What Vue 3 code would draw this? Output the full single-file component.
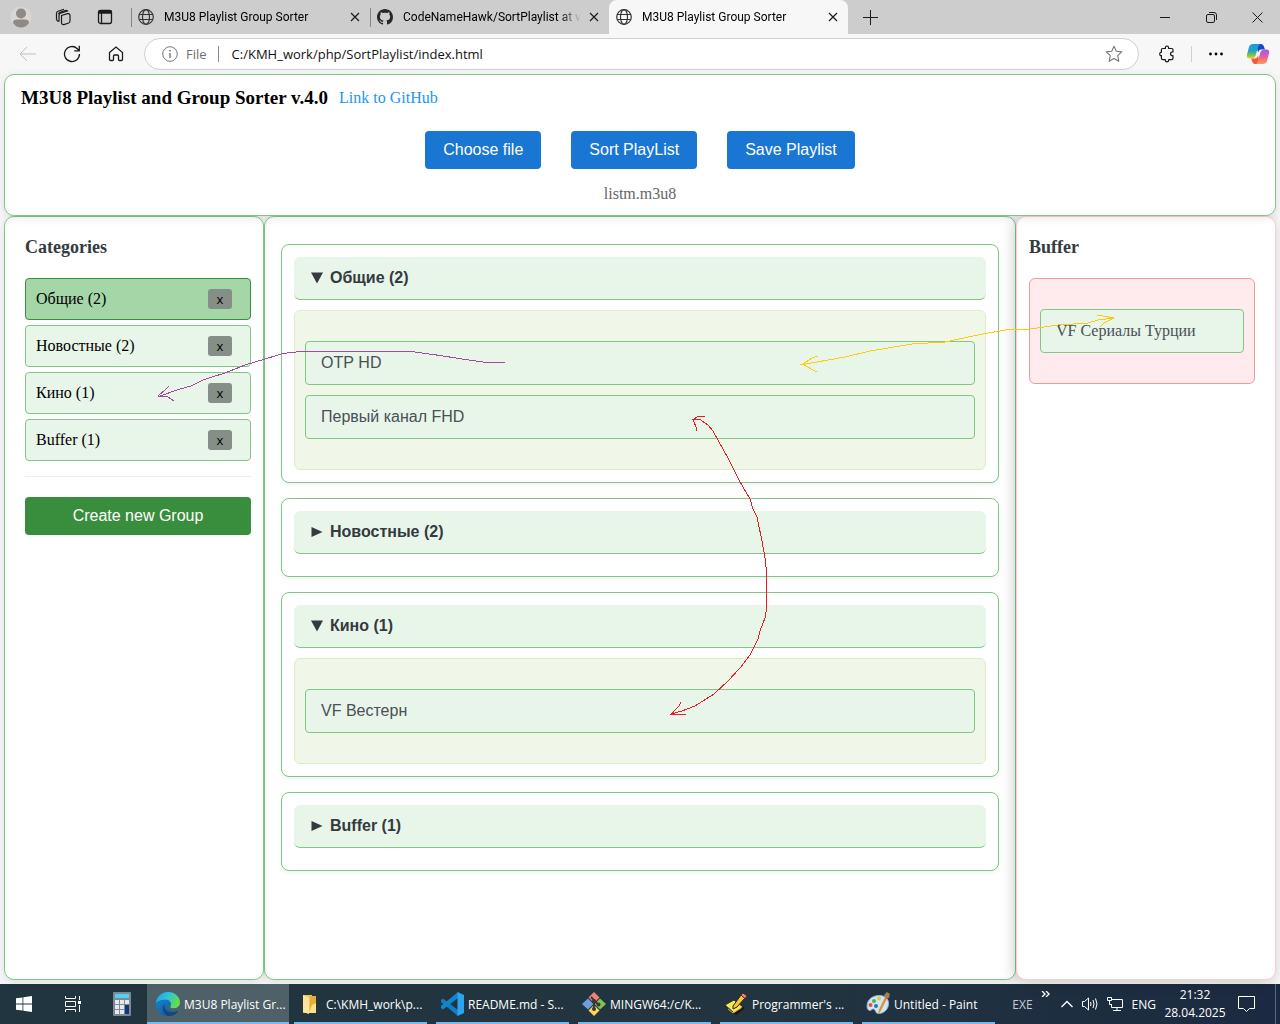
<script setup>
import { ref } from 'vue'

const tabs = [
  { title: 'M3U8 Playlist Group Sorter', icon: 'globe', active: false },
  { title: 'CodeNameHawk/SortPlaylist at v.', icon: 'github', active: false },
  { title: 'M3U8 Playlist Group Sorter', icon: 'globe', active: true }
]

const groups = ref([
  { name: 'Общие', count: 2, open: true, channels: ['ОТР HD', 'Первый канал FHD'] },
  { name: 'Новостные', count: 2, open: false, channels: [] },
  { name: 'Кино', count: 1, open: true, channels: ['VF Вестерн'] },
  { name: 'Buffer', count: 1, open: false, channels: [] }
])
const current = ref(0)
const buffer = ['VF Сериалы Турции']

const tasks = [
  { title: 'M3U8 Playlist Gr...', icon: 'edge', active: true },
  { title: 'C:\\KMH_work\\p...', icon: 'folder' },
  { title: 'README.md - S...', icon: 'code' },
  { title: 'MINGW64:/c/K...', icon: 'git' },
  { title: "Programmer's ...", icon: 'notepad' },
  { title: 'Untitled - Paint', icon: 'paint' }
]
</script>

<template>
  <div class="screen">
    <header class="tabbar">
      <div class="tools">
        <button class="tool" aria-label="Profile">
          <svg width="24" height="24" viewBox="0 0 24 24"><circle cx="12" cy="12" r="10.5" fill="#d9d6d3" /><circle cx="12" cy="8.500" r="5" fill="#8f8a86" /><path d="M4 18c0-2.500 1.500-3.500 3.500-3.500h9c2 0 3.500 1 3.500 3.500-2 3-5 4.500-8 4.500s-6-1.500-8-4.500z" fill="#8f8a86" /></svg>
        </button>
        <button class="tool" aria-label="Workspaces">
          <svg class="ln" width="18" height="18" viewBox="0 0 18 18"><path d="M7.500 7.500l6-1.800q2-.5 2.500 1.300v6q0 1.500-1.300 2l-4.700 1.600q-2 .4-2.500-1.400zM5 13.500V7.500q0-1.700 1.500-2.200L13.500 3q-.8-.9-2.200-.5L6 4.200Q4.600 4.700 4.600 6.200M2.500 11.500V5.500q0-1.700 1.500-2.200L10 1.300M5 13.500q-1.800 0-2.500-2" stroke-width="1.200" /></svg>
        </button>
        <button class="tool" aria-label="Tab actions">
          <svg class="ln" width="16" height="16" viewBox="0 0 16 16"><rect x="1.500" y="1.500" width="13" height="13" rx="2" stroke-width="1.300" /><path d="M1.500 3h13" stroke-width="3.500" /><path d="M4.500 4v10" stroke-width="1.300" /></svg>
        </button>
      </div>
      <nav class="tabs">
        <div v-for="(t, i) in tabs" :key="i" class="tab" :class="{ active: t.active }">
          <svg v-if="t.icon === 'globe'" class="fav" viewBox="0 0 16 16"><g fill="none" stroke="#33373b" stroke-width="1.200"><circle cx="8" cy="8" r="7.300" /><ellipse cx="8" cy="8" rx="3.500" ry="7.300" /><path d="M1.300 5.500h13.400M1.300 10.500h13.400" /></g></svg>
          <svg v-else class="fav" viewBox="0 0 16 16"><path fill="#24292f" d="M8 0C3.580 0 0 3.580 0 8c0 3.540 2.290 6.530 5.470 7.590.4.070.55-.17.55-.38v-1.490c-2.230.48-2.700-.95-2.700-.95-.36-.93-.89-1.180-.89-1.180-.73-.5.050-.49.050-.49.800.060 1.230.83 1.230.83.710 1.230 1.870.88 2.330.67.070-.52.280-.88.510-1.080-1.780-.2-3.640-.89-3.640-3.950 0-.87.310-1.590.82-2.150-.08-.2-.36-1.020.080-2.120 0 0 .67-.21 2.200.82a7.600 7.600 0 0 1 4 0c1.530-1.040 2.200-.82 2.200-.82.440 1.100.16 1.920.080 2.120.51.560.82 1.270.82 2.150 0 3.070-1.870 3.750-3.650 3.950.29.250.54.730.54 1.480v2.190c0 .21.150.46.550.38A8 8 0 0 0 16 8c0-4.420-3.580-8-8-8z" /></svg>
          <span class="tab-title">{{ t.title }}</span>
          <button class="tab-close" aria-label="Close tab">
            <svg class="ln" width="10" height="10" viewBox="0 0 10 10"><path d="M1 1l8 8M9 1L1 9" stroke-width="1.200" /></svg>
          </button>
        </div>
      </nav>
      <button class="newtab" aria-label="New tab">
        <svg class="ln" width="15" height="15" viewBox="0 0 15 15"><path d="M7.500 0v15M0 7.500h15" /></svg>
      </button>
      <div class="window-controls">
        <button aria-label="Minimize"><svg class="ln" width="10" height="10" viewBox="0 0 10 10"><path d="M0 5.500h10" /></svg></button>
        <button aria-label="Restore"><svg class="ln" width="11" height="11" viewBox="0 0 11 11"><rect x=".5" y="2.500" width="8" height="8" rx="1.500" /><path d="M3 .5h5q2.500 0 2.500 2.500v5" /></svg></button>
        <button aria-label="Close"><svg class="ln" width="11" height="11" viewBox="0 0 11 11"><path d="M.5.500l10 10M10.500.500l-10 10" /></svg></button>
      </div>
    </header>

    <div class="toolbar">
      <button class="nav-btn dim" aria-label="Back"><svg class="ln" width="18" height="16" viewBox="0 0 18 16"><path d="M17 8H1M8 1L1 8l7 7" /></svg></button>
      <button class="nav-btn" aria-label="Refresh"><svg class="ln" width="18" height="18" viewBox="0 0 18 18"><path d="M16.500 9A7.500 7.500 0 1 1 14.300 3.700L16 5.500M16.300.8v5h-5" stroke-width="1.300" /></svg></button>
      <button class="nav-btn" aria-label="Home"><svg class="ln" width="16" height="16" viewBox="0 0 16 16"><path d="M1.500 6.500L8 1l6.500 5.500v7q0 1-1 1h-2q-1 0-1-1V10q0-1-1-1h-3q-1 0-1 1v3.500q0 1-1 1h-2q-1 0-1-1z" stroke-width="1.300" /></svg></button>
      <div class="address">
        <svg width="16" height="16" viewBox="0 0 16 16" fill="none" stroke="#777"><circle cx="8" cy="8" r="7.300" /><path d="M8 7v5" stroke-width="1.400" /><circle cx="8" cy="4.700" r=".5" fill="#777" /></svg>
        <label for="url">File</label>
        <span class="bar"></span>
        <input id="url" type="text" value="C:/KMH_work/php/SortPlaylist/index.html" />
        <svg width="18" height="18" viewBox="0 0 18 18" fill="none" stroke="#777" stroke-width="1.100" stroke-linejoin="round"><path d="M9 1.300l2.300 5 5.400.600-4 3.700 1.100 5.600L9 13.500l-4.800 2.700 1.100-5.600-4-3.700 5.400-.6z" /></svg>
      </div>
      <button class="ext" aria-label="Extensions"><svg class="ln" width="16" height="18" viewBox="0 0 16 18"><path d="M3.500 3.500h2.800Q6.300 1 8 1t1.700 2.500h3q1.300 0 1.300 1.300v2q-2.500 0-2.500 2t2.500 2v2.500q0 1.300-1.300 1.300h-2.900q0 2.300-1.800 2.300t-1.800-2.300H3.700q-1.300 0-1.300-1.300v-2.700Q.700 10.600.700 9t1.700-1.800V4.800q0-1.300 1.100-1.300z" stroke-width="1.200" /></svg></button>
      <span class="tool-sep"></span>
      <button class="more" aria-label="Settings and more"><svg width="16" height="4" viewBox="0 0 16 4"><circle cx="2.500" cy="2" r="1.400" /><circle cx="8" cy="2" r="1.400" /><circle cx="13.500" cy="2" r="1.400" /></svg></button>
      <button class="copilot" aria-label="Copilot">
        <svg width="24" height="22" viewBox="0 0 24 22">
          <defs>
            <linearGradient id="cpA" x1="0" y1="0" x2="0" y2="1"><stop offset="0" stop-color="#1b9be8" /><stop offset=".5" stop-color="#25a5c0" /><stop offset=".8" stop-color="#8dc63f" /><stop offset="1" stop-color="#f5d21c" /></linearGradient>
            <linearGradient id="cpB" x1="0" y1="0" x2="0" y2="1"><stop offset="0" stop-color="#9b5cf0" /><stop offset=".5" stop-color="#ee5a9a" /><stop offset="1" stop-color="#ff9b54" /></linearGradient>
          </defs>
          <path d="M10 1h5q2 0 2.700 2L19 6.500h-4q-2 0-3 3z" fill="#1d49c8" />
          <path d="M14 21H9q-2 0-2.500-2L5 15.500H9q2 0 3-3z" fill="#ee5a3a" />
          <path d="M7 1h7q-1.500 1-2 3L9.500 13q-1 2.500-3.500 2.500H3.500Q0 15.500 1 11.500L3 4q1-3 4-3z" fill="url(#cpA)" />
          <path d="M17 21h-7q1.500-1 2-3l2.500-9q1-2.500 3.500-2.500h2.500q3.500 0 2.500 4L21 18q-1 3-4 3z" fill="url(#cpB)" />
        </svg>
      </button>
    </div>

    <main class="page">
      <section class="head">
        <div class="title-row">
          <h1>M3U8 Playlist and Group Sorter v.4.0</h1>
          <a href="#">Link to GitHub</a>
        </div>
        <div class="actions">
          <button>Choose file</button>
          <button>Sort PlayList</button>
          <button>Save Playlist</button>
        </div>
        <p class="file-name">listm.m3u8</p>
      </section>

      <div class="columns">
        <aside class="panel left">
          <h2>Categories</h2>
          <ul class="categories">
            <li v-for="(g, i) in groups" :key="g.name" :class="{ current: i === current }" @click="current = i">
              <span>{{ g.name }} ({{ g.count }})</span>
              <button class="remove" aria-label="Delete group">x</button>
            </li>
          </ul>
          <hr />
          <button class="create">Create new Group</button>
        </aside>

        <section class="panel middle">
          <article v-for="g in groups" :key="g.name" class="group">
            <button class="group-head" :aria-expanded="g.open" @click="g.open = !g.open">
              <svg width="12" height="12" viewBox="0 0 12 12"><path v-if="g.open" d="M0 .5h12L6 11.500z" /><path v-else d="M.500 1v10l11-5z" /></svg>
              <span>{{ g.name }} ({{ g.count }})</span>
            </button>
            <ul v-if="g.open" class="channels">
              <li v-for="c in g.channels" :key="c">{{ c }}</li>
            </ul>
          </article>
        </section>

        <aside class="panel right">
          <h2>Buffer</h2>
          <ul class="channels buffer">
            <li v-for="c in buffer" :key="c">{{ c }}</li>
          </ul>
        </aside>
      </div>
    </main>

    <footer class="taskbar">
      <button class="launch" aria-label="Start"><svg width="16" height="16" viewBox="0 0 16 16" fill="#fff"><path d="M0 2.300L6.500 1.400v6.200H0zM7.300 1.300L16 0v7.600H7.300zM0 8.400h6.500v6.200L0 13.700zM7.300 8.400H16V16l-8.700-1.300z" /></svg></button>
      <button class="launch" aria-label="Task view"><svg width="17" height="16" viewBox="0 0 17 16" fill="none" stroke="#fff"><path d="M1.500 0v2.500h10V0M1.500 16v-2.500h10V16M1.500 5.500h10v5h-10zM15.500 0v4M15.500 9v7" /><rect x="14.500" y="5.500" width="2" height="2" fill="#fff" /></svg></button>
      <button class="launch pinned" aria-label="Calculator">
        <svg width="18" height="24" viewBox="0 0 18 24"><rect width="18" height="24" rx="1" fill="#7d8a94" /><rect x="2" y="2" width="14" height="4" fill="#4fd0f7" /><path fill="#e4e9ed" d="M2 8h4v4H2zM7 8h4v4H7zM12 8h4v4h-4zM2 13h4v4H2zM7 13h4v4H7zM2 18h4v4H2zM7 18h4v4H7z" /><path fill="#0c3a78" d="M12 13h4v9h-4z" /></svg>
      </button>

      <button v-for="t in tasks" :key="t.title" class="task" :class="{ active: t.active }">
        <svg v-if="t.icon === 'edge'" width="24" height="24" viewBox="0 0 24 24">
          <defs>
            <linearGradient id="edA" x1="0" y1="0" x2="1" y2=".4"><stop offset="0" stop-color="#1b9de2" /><stop offset=".5" stop-color="#2fc2df" /><stop offset="1" stop-color="#66dc45" /></linearGradient>
            <linearGradient id="edB" x1="0" y1="0" x2=".6" y2="1"><stop offset="0" stop-color="#1a8fdb" /><stop offset="1" stop-color="#0c59a4" /></linearGradient>
          </defs>
          <circle cx="12" cy="12" r="12" fill="url(#edB)" />
          <path d="M0 11C1 4 6 0 12 0c7 0 12 5 12 10.500 0 4-3 6-6.500 6-3 0-4-1.200-3-2.500 2-3-1-6.500-5-6.500C5 7.500 1.500 9 0 11z" fill="url(#edA)" />
          <path d="M8.500 12c-1.500 5 3 9 8 8.500 2 0 4-.8 5.500-2 .5 1-3 5.500-9 5.500C7 23 5 15 8.500 12z" fill="#12467f" />
          <path d="M14.500 14c-1 1.300 0 2.500 3 2.500 2.600 0 4.500-.9 5.500-2.500l1 3-2 1.500c-5 2.500-12 .5-11-5.500 1 0 2 .5 3.500 1z" fill="#4f6168" />
        </svg>
        <svg v-else-if="t.icon === 'folder'" width="24" height="24" viewBox="0 0 24 24"><path d="M5 3h9v18H5z" fill="#f3c756" /><path d="M12 4h6v17h-6z" fill="#e5ae3c" /><path d="M5 3l6 3v16l-6-2z" fill="#ffe39a" /><path d="M14 13l4-2v10h-7z" fill="#ffe08a" /></svg>
        <svg v-else-if="t.icon === 'code'" width="24" height="24" viewBox="0 0 24 24"><path d="M1 8l2-1.500L18 18v6L1 10z" fill="#0d7fc4" /><path d="M1 16l2 1.500L18 6V0L1 14z" fill="#1186d0" /><path d="M17.500 0L24 3v18l-6.500 3z" fill="#2ba5f0" /></svg>
        <svg v-else-if="t.icon === 'git'" width="24" height="24" viewBox="0 0 24 24"><path d="M12 0l5.500 5.500-5.500 5.500-5.500-5.500z" fill="#f47f7b" /><path d="M18 6.500l6 5.500-6 5.500-5.500-5.500z" fill="#7bc558" /><path d="M12 13l5.500 5.500L12 24l-5.500-5.500z" fill="#fbd75b" /><path d="M6 6.500l5.500 5.500L6 17.500.000 12z" fill="#6d9ee0" /><path d="M9 5l3 3v9M12 9l4 3" stroke="#3e352c" stroke-width="1.800" fill="none" /><g fill="#3e352c"><circle cx="12" cy="9" r="2" /><circle cx="16.500" cy="12.500" r="2" /><circle cx="12" cy="17" r="2" /></g></svg>
        <svg v-else-if="t.icon === 'notepad'" width="24" height="24" viewBox="0 0 24 24"><path d="M1 14l10-6 10 8-9 7z" fill="#17150b" /><path d="M1 13l9-5 9 7-9 6z" fill="#f5e66a" stroke="#3b360f" /><path d="M4 17l5 4 8-5" stroke="#c9b83a" fill="none" /><path d="M9 14L17 3l4 3-8 9-4 2z" fill="#f4c43a" stroke="#2b2410" /><path d="M17 3l2-2 4 3-2 2.500z" fill="#ef8a86" stroke="#5d2420" /></svg>
        <svg v-else width="24" height="24" viewBox="0 0 24 24"><path d="M1 14C1 7 8 3 14 3.500c6 .5 9 4 8.500 9C22 18 17 22 12 21.500c-3-.3-2-4-4.500-4.500-2-.4-2 2-4 1.500C1.500 18 1 16 1 14z" fill="#cfe6f5" stroke="#88b4d2" /><circle cx="8" cy="9" r="2" fill="#4fb04a" /><circle cx="13" cy="6.500" r="2" fill="#f1c62d" /><circle cx="4.500" cy="13" r="2" fill="#e5533c" /><circle cx="10" cy="14" r="2" fill="#2f6fb6" /><path d="M20 3l2 1.500-7 14-3 4 1-5z" fill="#e98e2e" /><path d="M18 3l3-3 3 2-1 4-3 1z" fill="#a97a55" /></svg>
        <span>{{ t.title }}</span>
      </button>

      <div class="tray">
        <span class="dimmed">EXE</span>
        <svg class="chev" width="9" height="6" viewBox="0 0 9 6"><path d="M1 0l3 3-3 3M5 0l3 3-3 3" stroke-width="1.400" /></svg>
        <svg width="12" height="8" viewBox="0 0 12 8"><path d="M.5 7L6 1.500 11.500 7" stroke-width="1.300" /></svg>
        <svg width="18" height="16" viewBox="0 0 18 16"><path d="M1.500 5.500h2L7.500 2v12l-4-3.500h-2zM9.500 6q1 2 0 4M12 4q2 4 0 8M14.500 2.500q3 5.500 0 11" /></svg>
        <svg width="17" height="14" viewBox="0 0 17 14"><path d="M5 2.500h10.500v8H4.500V7M10 10.500v3M6 13.500h8M.5.500h4v3h-4zM2.500 4v3.500h2" /></svg>
        <span>ENG</span>
        <time datetime="2025-04-28T21:32"><span>21:32</span><span>28.04.2025</span></time>
        <svg width="17" height="17" viewBox="0 0 17 17"><path d="M.5.500h16v12h-5L8.500 15.500 5.500 12.500h-5z" /></svg>
        <i class="show-desktop"></i>
      </div>
    </footer>

    <svg class="strokes" width="1280" height="1024" viewBox="0 0 1280 1024">
      <path stroke="#a349a4" d="M505 362.500H486L462 359L440 355.500L415 352L385 351.500H300L283 353.500L265 359L245 365L225 373L204 379.500L191 386L180 389L160 396M169 386l-4 4-7 6 10 1 6 4" />
      <path stroke="#ffc90e" d="M800 364.500H803L845 357L870 351L912 344L945 342L980 334.500L1008 329.500L1030 329L1058 325L1088 323L1098 320L1114 318M1097 315.500L1103 316L1114 318L1104 323L1100 327M818 356L812 358L803 364L811 369L817 372" />
      <path stroke="#ed1c24" d="M693 419.500H700L708 425L713 431L719 442L728 458L739 480L750 499L753 509L757 517L762 541L765 558L766.500 572V609L765 618L760 631L758 639L750 655L740 668L728 681L714 694L695 706L682 711L671 714M704.500 416H699L693 419.500L696 427L697 431M681 702L679 706L671 714.500H686" />
    </svg>
  </div>
</template>

<style>
body {
  margin: 0;
}
</style>

<style scoped>
* {
  box-sizing: border-box;
}
.screen {
  position: relative;
  display: flex;
  flex-direction: column;
  min-height: 100vh;
  overflow: hidden;
  background: #f7f7f7;
  font-family: "Liberation Serif", serif;
  font-size: 16px;
}
button {
  border: 0;
  padding: 0;
  margin: 0;
  background: none;
  font: inherit;
  cursor: pointer;
}
svg {
  flex: none;
  display: block;
}
ul {
  list-style: none;
  margin: 0;
  padding: 0;
}
.ln {
  fill: none;
  stroke: #1b1b1b;
}
.tabbar,
.toolbar,
.taskbar {
  font-family: "Open Sans", "Noto Sans", sans-serif;
  font-size: 12px;
}

/* tab strip */
.tabbar {
  display: flex;
  height: 34px;
  background: #cdcdcd;
}
.tools {
  display: flex;
  width: 131px;
}
.tool {
  display: grid;
  place-items: center;
  width: 42px;
}
.tabs {
  display: flex;
}
.tab {
  display: flex;
  align-items: center;
  width: 239px;
  padding: 0 10px 0 7px;
  position: relative;
}
.tab:not(.active)::before {
  content: "";
  position: absolute;
  left: 0;
  top: 8px;
  width: 1px;
  height: 19px;
  background: #858585;
}
.tab.active {
  background: #f7f7f7;
  border-radius: 8px 8px 0 0;
}
.fav {
  width: 16px;
  height: 16px;
  margin-right: 10px;
}
.tab-title {
  flex: 1;
  overflow: hidden;
  white-space: nowrap;
  margin-right: 8px;
  font-family: Roboto, sans-serif;
  mask-image: linear-gradient(to right, #000 88%, transparent);
}
.tab-close {
  display: grid;
  place-items: center;
}
.newtab {
  width: 44px;
  display: grid;
  place-items: center;
}
.window-controls {
  display: flex;
  margin-left: auto;
}
.window-controls button {
  width: 46px;
  display: grid;
  place-items: center;
}

/* address row */
.toolbar {
  display: flex;
  align-items: center;
  height: 40px;
  padding-left: 6px;
}
.nav-btn {
  width: 44px;
  height: 32px;
  display: grid;
  place-items: center;
}
.dim {
  opacity: 0.25;
}
.address {
  flex: 1;
  display: flex;
  align-items: center;
  height: 32px;
  margin-left: 6px;
  padding: 0 15px 0 17px;
  border: 1px solid #cfcfcf;
  border-radius: 16px;
  background: #fff;
  font-size: 13px;
}
.address label {
  margin-left: 8px;
  color: #6f6f6f;
}
.bar {
  width: 1px;
  height: 16px;
  margin: 0 13px 0 11px;
  background: #8a8a8a;
}
.address input {
  flex: 1;
  min-width: 0;
  padding: 0;
  border: 0;
  outline: 0;
  background: none;
  color: #111;
  font: inherit;
}
.ext,
.more,
.copilot {
  display: grid;
  place-items: center;
  height: 32px;
}
.ext {
  width: 52px;
  padding-left: 4px;
}
.tool-sep {
  width: 1px;
  height: 16px;
  background: #cfcfcf;
}
.more {
  width: 48px;
}
.copilot {
  width: 40px;
  padding-right: 4px;
}

/* page */
.page {
  flex: 1;
  display: flex;
  flex-direction: column;
  padding: 0 4px 4px;
}
.head,
.panel {
  border: 1px solid #81c784;
  border-radius: 10px;
  background: #fff;
  box-shadow: 0 2px 10px rgba(0, 0, 0, 0.1);
}
.head {
  position: relative;
  z-index: 2;
  height: 142px;
}
.title-row {
  display: flex;
  align-items: center;
  gap: 11px;
  padding: 12px 16px 0;
  line-height: 22px;
}
h1 {
  margin: 0;
  font-size: 19px;
}
.title-row a {
  color: #2196f3;
  text-decoration: none;
}
.actions {
  display: flex;
  justify-content: center;
  gap: 30px;
  margin-top: 22px;
}
.actions button,
.create {
  height: 38px;
  border-radius: 4px;
  background: #1976d2;
  color: #fff;
  font-family: "Liberation Sans", sans-serif;
  font-size: 16px;
}
.actions button {
  padding: 0 18px;
}
.file-name {
  margin: 16px 0 0;
  line-height: 18px;
  text-align: center;
  color: #666;
}
.columns {
  flex: 1;
  display: flex;
}
.left,
.right {
  position: relative;
  z-index: 1;
  width: 260px;
}
.left {
  padding: 20px 12px 0 20px;
}
.right {
  padding: 20px 20px 0 12px;
  border-color: #ffcdd2;
  box-shadow: -2px 2px 14px rgba(0, 0, 0, 0.2);
}
.middle {
  flex: 1;
  min-width: 0;
  padding: 27px 16px 0;
}
h2 {
  margin: 0 0 20px;
  font-size: 18px;
  line-height: 21px;
  color: #343a40;
}
.categories {
  display: flex;
  flex-direction: column;
  gap: 5px;
}
.categories li {
  display: flex;
  align-items: center;
  justify-content: space-between;
  height: 42px;
  padding: 0 18px 0 10px;
  border: 1px solid #81c784;
  border-radius: 4px;
  background: #e8f5e9;
}
.categories li.current {
  background: #a5d6a7;
  border-color: #388e3c;
}
.remove {
  width: 24px;
  height: 20px;
  border-radius: 3px;
  background: #868f87;
  color: #000;
  font-family: "Open Sans", sans-serif;
  font-size: 13px;
  line-height: 20px;
}
hr {
  margin: 15px 0 20px;
  border: 0;
  border-top: 1px solid #eee;
}
.create {
  width: 100%;
  background: #388e3c;
}
.group {
  padding: 12px;
  margin-bottom: 15px;
  border: 1px solid #81c784;
  border-radius: 8px;
  background: #fff;
  box-shadow: 0 2px 4px rgba(0, 0, 0, 0.06);
  font-family: "Liberation Sans", sans-serif;
}
.group-head {
  display: flex;
  align-items: center;
  gap: 7px;
  width: 100%;
  height: 43px;
  margin-bottom: 10px;
  padding: 0 17px;
  border-bottom: 1px solid #81c784;
  border-radius: 6px;
  background: #e8f5e9;
  color: #343a40;
  font-weight: bold;
}
.group-head svg {
  fill: #343a40;
}
.channels {
  display: flex;
  flex-direction: column;
  gap: 10px;
  padding: 30px 10px;
  border: 1px solid #dcedc8;
  border-radius: 6px;
  background: #f1f7e8;
}
.channels li {
  height: 44px;
  padding: 0 15px;
  border: 1px solid #81c784;
  border-radius: 4px;
  background: #e8f5e9;
  color: #495057;
  line-height: 42px;
}
.channels.buffer {
  border-color: #ef9a9a;
  background: #ffebee;
}

/* taskbar */
.taskbar {
  display: flex;
  height: 40px;
  background: linear-gradient(to right, #20353f, #22343f 60%, #1b2a42);
  color: #fff;
}
.launch {
  width: 48px;
  display: grid;
  place-items: center;
}
.launch.pinned {
  margin: 0 1px 0 2px;
}
.task {
  position: relative;
  display: flex;
  align-items: center;
  gap: 4px;
  width: 142px;
  padding-left: 9px;
  color: #fff;
  white-space: nowrap;
}
.task::after {
  content: "";
  position: absolute;
  left: 5px;
  right: 4px;
  bottom: 0;
  height: 2px;
  background: #76b9ed;
}
.task.active {
  background: #4f6168;
}
.task.active::after {
  left: 0;
  right: 0;
}
.tray {
  display: flex;
  align-items: center;
  margin-left: auto;
  gap: 8px;
}
.tray svg {
  fill: none;
  stroke: #fff;
}
.tray .chev {
  align-self: flex-start;
  margin: 7px 3px 0 0;
}
.dimmed {
  color: #c5ccd2;
}
time {
  display: flex;
  flex-direction: column;
  width: 62px;
  line-height: 18px;
  text-align: center;
}
time + svg {
  margin-left: 4px;
}
.show-desktop {
  height: 40px;
  width: 5px;
  margin-left: 12px;
  border-left: 1px solid #5d6a7c;
}

/* pen marks over the page */
.strokes {
  position: absolute;
  left: 0;
  top: 0;
  z-index: 5;
  fill: none;
  pointer-events: none;
  shape-rendering: crispEdges;
}
</style>
